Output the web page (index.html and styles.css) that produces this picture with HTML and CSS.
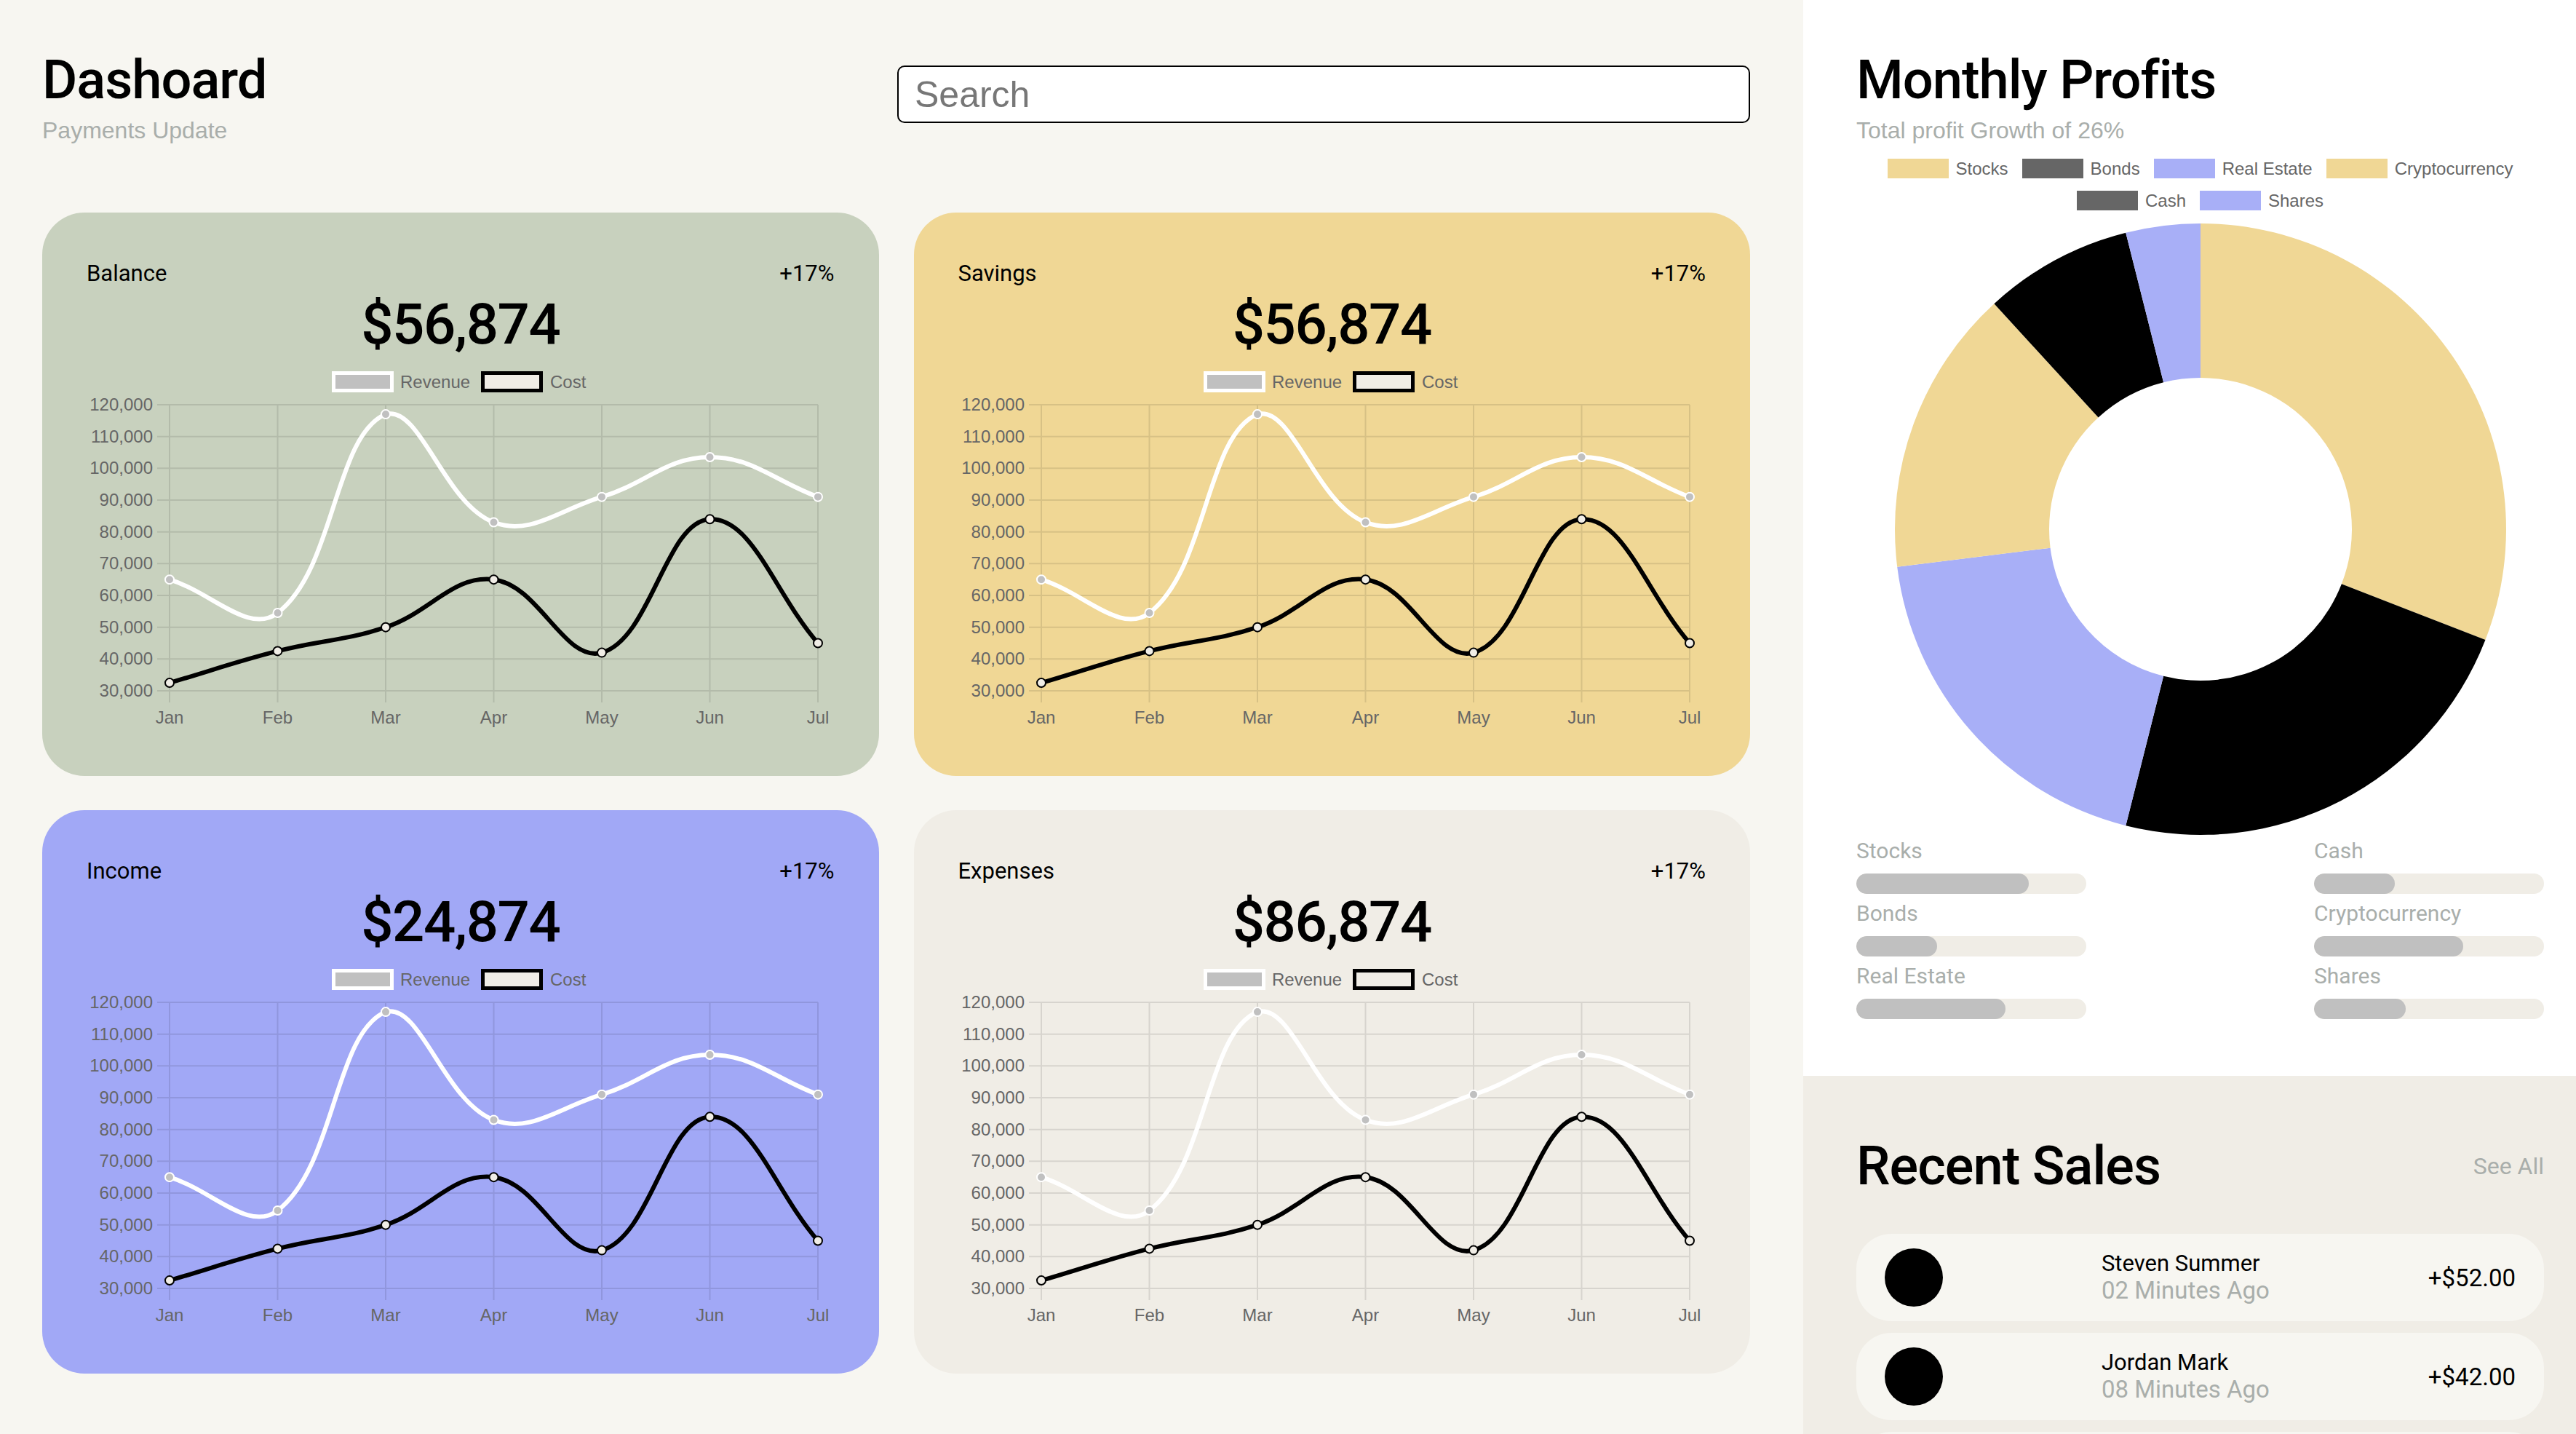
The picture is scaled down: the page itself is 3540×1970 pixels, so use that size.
FILE: index.html
```html
<!DOCTYPE html>
<html lang="en">
<head>
<meta charset="utf-8">
<title>Dashoard</title>
<link rel="stylesheet" href="styles.css">
</head>
<body>
<div class="app">
  <main class="main">
    <header class="top">
      <div class="title-block">
        <h1 class="page-title">Dashoard</h1>
        <p class="page-sub">Payments Update</p>
      </div>
      <input class="search" type="text" placeholder="Search">
    </header>

    <section class="cards">
      <article class="card card-balance">
        <div class="card-head"><span>Balance</span><span>+17%</span></div>
        <div class="card-value">$56,874</div>
        <svg class="chart" viewBox="0 0 1027 520" width="1027" height="520">
          <rect x="339.5" y="14.5" width="80" height="24" fill="#c0c0c0" stroke="#fff" stroke-width="5"/>
          <text x="431" y="35">Revenue</text>
          <rect x="544.5" y="14.5" width="80" height="24" fill="#f0ede6" stroke="#000" stroke-width="5"/>
          <text x="637" y="35">Cost</text>
          <path class="grid" d="M97 58H1005M97 101.67H1005M97 145.33H1005M97 189H1005M97 232.67H1005M97 276.33H1005M97 320H1005M97 363.67H1005M97 407.33H1005M97 451H1005M114 58V467M262.5 58V467M411 58V467M559.5 58V467M708 58V467M856.5 58V467M1005 58V467"/>
          <g class="yt">
            <text x="91" y="66">120,000</text><text x="91" y="109.67">110,000</text><text x="91" y="153.33">100,000</text><text x="91" y="197">90,000</text><text x="91" y="240.67">80,000</text><text x="91" y="284.33">70,000</text><text x="91" y="328">60,000</text><text x="91" y="371.67">50,000</text><text x="91" y="415.33">40,000</text><text x="91" y="459">30,000</text>
          </g>
          <g class="xt">
            <text x="114" y="496">Jan</text><text x="262.5" y="496">Feb</text><text x="411" y="496">Mar</text><text x="559.5" y="496">Apr</text><text x="708" y="496">May</text><text x="856.5" y="496">Jun</text><text x="1005" y="496">Jul</text>
          </g>
          <path class="line-rev" d="M114,298.17 C173.4,316.51 222.89,374.3 262.5,344.02 C341.69,283.48 340.11,100.8 411,71.1 C458.91,58 490.69,193.27 559.5,219.57 C609.49,238.68 649.68,202.21 708,184.63 C768.48,166.4 797.1,130.05 856.5,130.05 C915.9,130.05 945.6,162.8 1005,184.63"/>
          <path class="line-cost" d="M114,440.08 C173.4,422.62 202.57,411.84 262.5,396.42 C321.37,381.27 353.53,382.68 411,363.67 C472.33,343.38 503.05,291.53 559.5,298.17 C621.85,305.5 656.71,412.93 708,398.6 C775.51,379.74 795.81,217.88 856.5,215.2 C914.61,212.64 945.6,317.38 1005,385.5"/>
          <g class="pt-rev">
            <circle cx="114" cy="298.17" r="6"/><circle cx="262.5" cy="344.02" r="6"/><circle cx="411" cy="71.1" r="6"/><circle cx="559.5" cy="219.57" r="6"/><circle cx="708" cy="184.63" r="6"/><circle cx="856.5" cy="130.05" r="6"/><circle cx="1005" cy="184.63" r="6"/>
          </g>
          <g class="pt-cost">
            <circle cx="114" cy="440.08" r="6"/><circle cx="262.5" cy="396.42" r="6"/><circle cx="411" cy="363.67" r="6"/><circle cx="559.5" cy="298.17" r="6"/><circle cx="708" cy="398.6" r="6"/><circle cx="856.5" cy="215.2" r="6"/><circle cx="1005" cy="385.5" r="6"/>
          </g>
        </svg>
      </article>

      <article class="card card-savings">
        <div class="card-head"><span>Savings</span><span>+17%</span></div>
        <div class="card-value">$56,874</div>
        <svg class="chart" viewBox="0 0 1027 520" width="1027" height="520">
          <rect x="339.5" y="14.5" width="80" height="24" fill="#c0c0c0" stroke="#fff" stroke-width="5"/>
          <text x="431" y="35">Revenue</text>
          <rect x="544.5" y="14.5" width="80" height="24" fill="#f0ede6" stroke="#000" stroke-width="5"/>
          <text x="637" y="35">Cost</text>
          <path class="grid" d="M97 58H1005M97 101.67H1005M97 145.33H1005M97 189H1005M97 232.67H1005M97 276.33H1005M97 320H1005M97 363.67H1005M97 407.33H1005M97 451H1005M114 58V467M262.5 58V467M411 58V467M559.5 58V467M708 58V467M856.5 58V467M1005 58V467"/>
          <g class="yt">
            <text x="91" y="66">120,000</text><text x="91" y="109.67">110,000</text><text x="91" y="153.33">100,000</text><text x="91" y="197">90,000</text><text x="91" y="240.67">80,000</text><text x="91" y="284.33">70,000</text><text x="91" y="328">60,000</text><text x="91" y="371.67">50,000</text><text x="91" y="415.33">40,000</text><text x="91" y="459">30,000</text>
          </g>
          <g class="xt">
            <text x="114" y="496">Jan</text><text x="262.5" y="496">Feb</text><text x="411" y="496">Mar</text><text x="559.5" y="496">Apr</text><text x="708" y="496">May</text><text x="856.5" y="496">Jun</text><text x="1005" y="496">Jul</text>
          </g>
          <path class="line-rev" d="M114,298.17 C173.4,316.51 222.89,374.3 262.5,344.02 C341.69,283.48 340.11,100.8 411,71.1 C458.91,58 490.69,193.27 559.5,219.57 C609.49,238.68 649.68,202.21 708,184.63 C768.48,166.4 797.1,130.05 856.5,130.05 C915.9,130.05 945.6,162.8 1005,184.63"/>
          <path class="line-cost" d="M114,440.08 C173.4,422.62 202.57,411.84 262.5,396.42 C321.37,381.27 353.53,382.68 411,363.67 C472.33,343.38 503.05,291.53 559.5,298.17 C621.85,305.5 656.71,412.93 708,398.6 C775.51,379.74 795.81,217.88 856.5,215.2 C914.61,212.64 945.6,317.38 1005,385.5"/>
          <g class="pt-rev">
            <circle cx="114" cy="298.17" r="6"/><circle cx="262.5" cy="344.02" r="6"/><circle cx="411" cy="71.1" r="6"/><circle cx="559.5" cy="219.57" r="6"/><circle cx="708" cy="184.63" r="6"/><circle cx="856.5" cy="130.05" r="6"/><circle cx="1005" cy="184.63" r="6"/>
          </g>
          <g class="pt-cost">
            <circle cx="114" cy="440.08" r="6"/><circle cx="262.5" cy="396.42" r="6"/><circle cx="411" cy="363.67" r="6"/><circle cx="559.5" cy="298.17" r="6"/><circle cx="708" cy="398.6" r="6"/><circle cx="856.5" cy="215.2" r="6"/><circle cx="1005" cy="385.5" r="6"/>
          </g>
        </svg>
      </article>

      <article class="card card-income">
        <div class="card-head"><span>Income</span><span>+17%</span></div>
        <div class="card-value">$24,874</div>
        <svg class="chart" viewBox="0 0 1027 520" width="1027" height="520">
          <rect x="339.5" y="14.5" width="80" height="24" fill="#c0c0c0" stroke="#fff" stroke-width="5"/>
          <text x="431" y="35">Revenue</text>
          <rect x="544.5" y="14.5" width="80" height="24" fill="#f0ede6" stroke="#000" stroke-width="5"/>
          <text x="637" y="35">Cost</text>
          <path class="grid" d="M97 58H1005M97 101.67H1005M97 145.33H1005M97 189H1005M97 232.67H1005M97 276.33H1005M97 320H1005M97 363.67H1005M97 407.33H1005M97 451H1005M114 58V467M262.5 58V467M411 58V467M559.5 58V467M708 58V467M856.5 58V467M1005 58V467"/>
          <g class="yt">
            <text x="91" y="66">120,000</text><text x="91" y="109.67">110,000</text><text x="91" y="153.33">100,000</text><text x="91" y="197">90,000</text><text x="91" y="240.67">80,000</text><text x="91" y="284.33">70,000</text><text x="91" y="328">60,000</text><text x="91" y="371.67">50,000</text><text x="91" y="415.33">40,000</text><text x="91" y="459">30,000</text>
          </g>
          <g class="xt">
            <text x="114" y="496">Jan</text><text x="262.5" y="496">Feb</text><text x="411" y="496">Mar</text><text x="559.5" y="496">Apr</text><text x="708" y="496">May</text><text x="856.5" y="496">Jun</text><text x="1005" y="496">Jul</text>
          </g>
          <path class="line-rev" d="M114,298.17 C173.4,316.51 222.89,374.3 262.5,344.02 C341.69,283.48 340.11,100.8 411,71.1 C458.91,58 490.69,193.27 559.5,219.57 C609.49,238.68 649.68,202.21 708,184.63 C768.48,166.4 797.1,130.05 856.5,130.05 C915.9,130.05 945.6,162.8 1005,184.63"/>
          <path class="line-cost" d="M114,440.08 C173.4,422.62 202.57,411.84 262.5,396.42 C321.37,381.27 353.53,382.68 411,363.67 C472.33,343.38 503.05,291.53 559.5,298.17 C621.85,305.5 656.71,412.93 708,398.6 C775.51,379.74 795.81,217.88 856.5,215.2 C914.61,212.64 945.6,317.38 1005,385.5"/>
          <g class="pt-rev">
            <circle cx="114" cy="298.17" r="6"/><circle cx="262.5" cy="344.02" r="6"/><circle cx="411" cy="71.1" r="6"/><circle cx="559.5" cy="219.57" r="6"/><circle cx="708" cy="184.63" r="6"/><circle cx="856.5" cy="130.05" r="6"/><circle cx="1005" cy="184.63" r="6"/>
          </g>
          <g class="pt-cost">
            <circle cx="114" cy="440.08" r="6"/><circle cx="262.5" cy="396.42" r="6"/><circle cx="411" cy="363.67" r="6"/><circle cx="559.5" cy="298.17" r="6"/><circle cx="708" cy="398.6" r="6"/><circle cx="856.5" cy="215.2" r="6"/><circle cx="1005" cy="385.5" r="6"/>
          </g>
        </svg>
      </article>

      <article class="card card-expenses">
        <div class="card-head"><span>Expenses</span><span>+17%</span></div>
        <div class="card-value">$86,874</div>
        <svg class="chart" viewBox="0 0 1027 520" width="1027" height="520">
          <rect x="339.5" y="14.5" width="80" height="24" fill="#c0c0c0" stroke="#fff" stroke-width="5"/>
          <text x="431" y="35">Revenue</text>
          <rect x="544.5" y="14.5" width="80" height="24" fill="#f0ede6" stroke="#000" stroke-width="5"/>
          <text x="637" y="35">Cost</text>
          <path class="grid" d="M97 58H1005M97 101.67H1005M97 145.33H1005M97 189H1005M97 232.67H1005M97 276.33H1005M97 320H1005M97 363.67H1005M97 407.33H1005M97 451H1005M114 58V467M262.5 58V467M411 58V467M559.5 58V467M708 58V467M856.5 58V467M1005 58V467"/>
          <g class="yt">
            <text x="91" y="66">120,000</text><text x="91" y="109.67">110,000</text><text x="91" y="153.33">100,000</text><text x="91" y="197">90,000</text><text x="91" y="240.67">80,000</text><text x="91" y="284.33">70,000</text><text x="91" y="328">60,000</text><text x="91" y="371.67">50,000</text><text x="91" y="415.33">40,000</text><text x="91" y="459">30,000</text>
          </g>
          <g class="xt">
            <text x="114" y="496">Jan</text><text x="262.5" y="496">Feb</text><text x="411" y="496">Mar</text><text x="559.5" y="496">Apr</text><text x="708" y="496">May</text><text x="856.5" y="496">Jun</text><text x="1005" y="496">Jul</text>
          </g>
          <path class="line-rev" d="M114,298.17 C173.4,316.51 222.89,374.3 262.5,344.02 C341.69,283.48 340.11,100.8 411,71.1 C458.91,58 490.69,193.27 559.5,219.57 C609.49,238.68 649.68,202.21 708,184.63 C768.48,166.4 797.1,130.05 856.5,130.05 C915.9,130.05 945.6,162.8 1005,184.63"/>
          <path class="line-cost" d="M114,440.08 C173.4,422.62 202.57,411.84 262.5,396.42 C321.37,381.27 353.53,382.68 411,363.67 C472.33,343.38 503.05,291.53 559.5,298.17 C621.85,305.5 656.71,412.93 708,398.6 C775.51,379.74 795.81,217.88 856.5,215.2 C914.61,212.64 945.6,317.38 1005,385.5"/>
          <g class="pt-rev">
            <circle cx="114" cy="298.17" r="6"/><circle cx="262.5" cy="344.02" r="6"/><circle cx="411" cy="71.1" r="6"/><circle cx="559.5" cy="219.57" r="6"/><circle cx="708" cy="184.63" r="6"/><circle cx="856.5" cy="130.05" r="6"/><circle cx="1005" cy="184.63" r="6"/>
          </g>
          <g class="pt-cost">
            <circle cx="114" cy="440.08" r="6"/><circle cx="262.5" cy="396.42" r="6"/><circle cx="411" cy="363.67" r="6"/><circle cx="559.5" cy="298.17" r="6"/><circle cx="708" cy="398.6" r="6"/><circle cx="856.5" cy="215.2" r="6"/><circle cx="1005" cy="385.5" r="6"/>
          </g>
        </svg>
      </article>
    </section>
  </main>

  <aside class="aside">
    <section class="profits">
      <h2 class="page-title">Monthly Profits</h2>
      <p class="page-sub">Total profit Growth of 26%</p>
      <ul class="legend">
        <li class="legend-item"><span class="swatch sw-yellow"></span>Stocks</li>
        <li class="legend-item"><span class="swatch sw-gray"></span>Bonds</li>
        <li class="legend-item"><span class="swatch sw-blue"></span>Real Estate</li>
        <li class="legend-item"><span class="swatch sw-yellow"></span>Cryptocurrency</li>
        <li class="legend-item"><span class="swatch sw-gray"></span>Cash</li>
        <li class="legend-item"><span class="swatch sw-blue"></span>Shares</li>
      </ul>
      <svg class="donut" viewBox="0 0 945 840" width="945" height="840">
        <path fill="#f0d795" d="M473,0 A420,420 0 0 1 864.47,572.12 L666.87,495.34 A208,208 0 0 0 473,212 Z"/>
        <path fill="#000000" d="M864.47,572.12 A420,420 0 0 1 370.28,827.24 L422.13,621.68 A208,208 0 0 0 666.87,495.34 Z"/>
        <path fill="#a8aff7" d="M370.28,827.24 A420,420 0 0 1 56.2,471.76 L266.59,445.63 A208,208 0 0 0 422.13,621.68 Z"/>
        <path fill="#f0d795" d="M56.2,471.76 A420,420 0 0 1 189.42,110.22 L332.56,266.58 A208,208 0 0 0 266.59,445.63 Z"/>
        <path fill="#000000" d="M189.42,110.22 A420,420 0 0 1 370.28,12.76 L422.13,218.32 A208,208 0 0 0 332.56,266.58 Z"/>
        <path fill="#a8aff7" d="M370.28,12.76 A420,420 0 0 1 473,0 L473,212 A208,208 0 0 0 422.13,218.32 Z"/>
      </svg>
      <div class="bars">
        <div class="bar-item"><div class="bar-label">Stocks</div><div class="track"><div class="fill" style="width:75%"></div></div></div>
        <div class="bar-item"><div class="bar-label">Cash</div><div class="track"><div class="fill" style="width:35%"></div></div></div>
        <div class="bar-item"><div class="bar-label">Bonds</div><div class="track"><div class="fill" style="width:35%"></div></div></div>
        <div class="bar-item"><div class="bar-label">Cryptocurrency</div><div class="track"><div class="fill" style="width:65%"></div></div></div>
        <div class="bar-item"><div class="bar-label">Real Estate</div><div class="track"><div class="fill" style="width:65%"></div></div></div>
        <div class="bar-item"><div class="bar-label">Shares</div><div class="track"><div class="fill" style="width:40%"></div></div></div>
      </div>
    </section>

    <section class="recent">
      <div class="recent-head">
        <h2 class="page-title">Recent Sales</h2>
        <a class="see-all" href="#">See All</a>
      </div>
      <ul class="sales">
        <li class="sale">
          <span class="avatar"></span>
          <div class="sale-text"><div class="sale-name">Steven Summer</div><div class="sale-time">02 Minutes Ago</div></div>
          <span class="amount">+$52.00</span>
        </li>
        <li class="sale">
          <span class="avatar"></span>
          <div class="sale-text"><div class="sale-name">Jordan Mark</div><div class="sale-time">08 Minutes Ago</div></div>
          <span class="amount">+$42.00</span>
        </li>
        <li class="sale" aria-hidden="true"></li>
      </ul>
    </section>
  </aside>
</div>
</body>
</html>
```

FILE: styles.css
```css
* {
  box-sizing: border-box;
  margin: 0;
  padding: 0;
}

html,
body {
  width: 3540px;
  height: 1970px;
  overflow: hidden;
}

body {
  font-family: "Roboto", "Liberation Sans", sans-serif;
  color: #000;
  background: #f7f6f1;
}

.app {
  display: grid;
  grid-template-columns: 2478px 1062px;
  height: 1970px;
}

/* ---------- main column ---------- */
.main {
  background: #f7f6f1;
  padding: 73px 73px 0 58px;
}

.top {
  display: flex;
  align-items: flex-start;
}

.page-title {
  font-size: 74px;
  line-height: 74px;
  font-weight: 500;
  letter-spacing: -1px;
}

.page-sub {
  margin-top: 13px;
  font-family: "Liberation Sans", Arial, sans-serif;
  font-size: 32px;
  line-height: 38px;
  color: #a9aeab;
}

.search {
  width: 1172px;
  height: 79px;
  margin: 17px 0 0 auto;
  padding: 0 22px;
  border: 2px solid #000;
  border-radius: 10px;
  background: #fff;
  font-family: "Liberation Sans", Arial, sans-serif;
  font-size: 50px;
  color: #000;
  outline: none;
}

.search::placeholder {
  color: #777;
}

.cards {
  display: grid;
  grid-template-columns: 1fr 1fr;
  column-gap: 48px;
  row-gap: 47px;
  margin-top: 94px;
}

.card {
  border-radius: 58px;
  padding: 66px 61px 48px;
}

.card-balance { background: #c8d1be; }
.card-savings { background: #f0d795; }
.card-income { background: #a1a8f6; }
.card-expenses { background: #f0ede6; }

.card-head {
  display: flex;
  justify-content: space-between;
  font-size: 31px;
  line-height: 36px;
  font-weight: 400;
}

.card-value {
  margin-top: 13px;
  text-align: center;
  font-size: 78px;
  line-height: 78px;
  font-weight: 500;
  letter-spacing: -1.5px;
}

.chart {
  display: block;
  margin-top: 13px;
  width: 1027px;
  height: 520px;
  overflow: visible;
}

.chart text {
  font-family: "Liberation Sans", Arial, sans-serif;
  font-size: 24px;
  fill: #666;
}

.chart .yt text {
  text-anchor: end;
}

.chart .xt text {
  text-anchor: middle;
}

.chart .grid {
  fill: none;
  stroke: rgba(0, 0, 0, 0.1);
  stroke-width: 2;
}

.line-rev,
.line-cost {
  fill: none;
  stroke-width: 6;
  stroke-linejoin: round;
  stroke-linecap: round;
}

.line-rev { stroke: #fff; }
.line-cost { stroke: #000; }

.pt-rev circle {
  fill: #c0c0c0;
  stroke: #fff;
  stroke-width: 2;
}

.pt-cost circle {
  fill: #f0ede6;
  stroke: #000;
  stroke-width: 2;
}

/* ---------- aside ---------- */
.aside {
  display: flex;
  flex-direction: column;
  background: #fff;
  overflow: hidden;
}

.profits {
  flex: 0 0 1478px;
  padding: 73px 44px 0 73px;
  background: #fff;
}

.legend {
  list-style: none;
  display: flex;
  flex-wrap: wrap;
  justify-content: center;
  column-gap: 19px;
  row-gap: 17px;
  margin-top: 20px;
  font-family: "Liberation Sans", Arial, sans-serif;
  font-size: 24px;
  line-height: 27px;
  color: #666;
}

.legend-item {
  display: flex;
  align-items: center;
}

.swatch {
  width: 84px;
  height: 27px;
  margin-right: 10px;
}

.sw-yellow { background: #f0d795; }
.sw-gray { background: #666666; }
.sw-blue { background: #a8aff7; }

.donut {
  display: block;
  margin-top: 18px;
  width: 945px;
  height: 840px;
}

.bars {
  display: grid;
  grid-template-columns: 316px 316px;
  justify-content: space-between;
  row-gap: 9px;
  margin-top: 4px;
}

.bar-label {
  font-size: 30px;
  line-height: 36px;
  color: #a9aeab;
}

.track {
  height: 28px;
  margin-top: 13px;
  border-radius: 14px;
  background: #f0ede6;
  overflow: hidden;
}

.fill {
  height: 100%;
  border-radius: 14px;
  background: #c0c0c0;
}

.recent {
  flex: 1 1 auto;
  background: #f0ede6;
  padding: 87px 44px 0 73px;
}

.recent-head {
  display: flex;
  justify-content: space-between;
  align-items: center;
}

.see-all {
  font-size: 32px;
  color: #a9aeab;
  text-decoration: none;
}

.sales {
  list-style: none;
  display: flex;
  flex-direction: column;
  gap: 16px;
  margin-top: 56px;
}

.sale {
  flex-shrink: 0;
  height: 120px;
  padding: 0 39px;
  border-radius: 48px;
  background: #f7f6f1;
  display: flex;
  align-items: center;
  justify-content: space-between;
}

.avatar {
  width: 80px;
  height: 80px;
  border-radius: 50%;
  background: #000;
}

.sale-name {
  font-size: 31px;
  line-height: 36px;
  font-weight: 400;
}

.sale-time {
  font-size: 33px;
  line-height: 38px;
  color: #a9aeab;
}

.amount {
  font-size: 33px;
  font-weight: 400;
}
```
